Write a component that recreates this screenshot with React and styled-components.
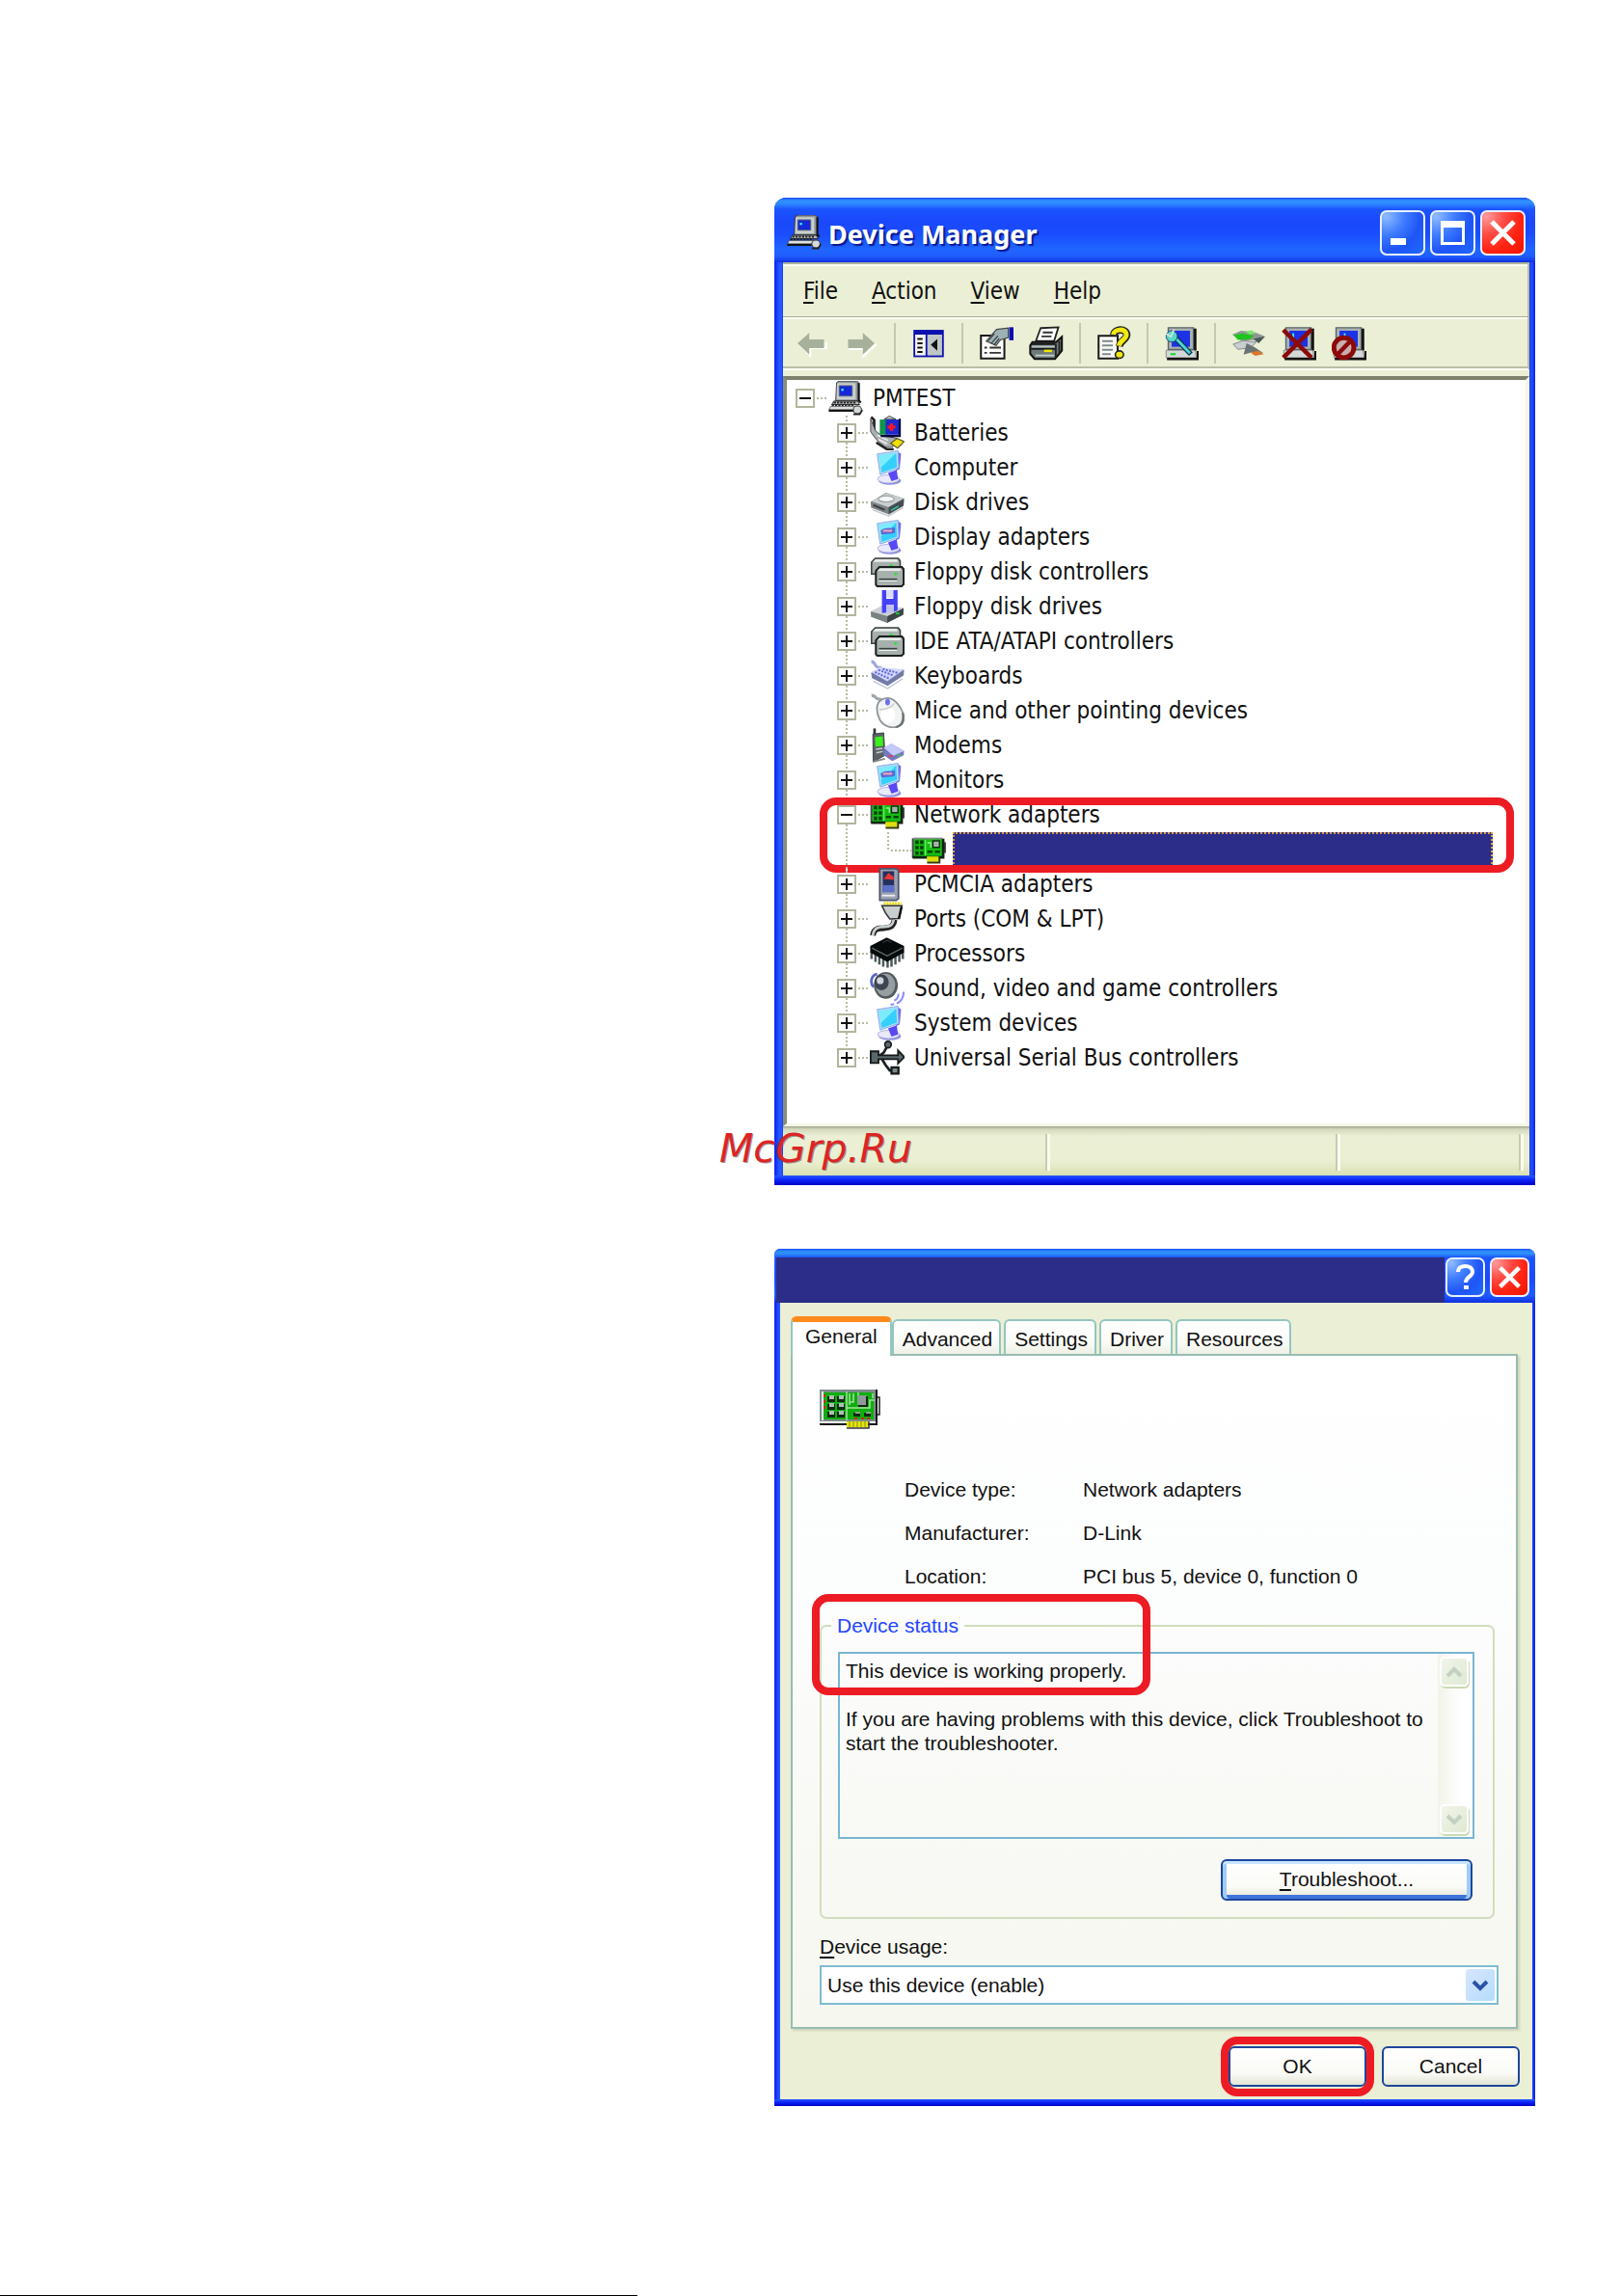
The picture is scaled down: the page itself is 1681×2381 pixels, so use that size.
import React, { useState } from "react";
import styled, { createGlobalStyle, css } from "styled-components";

const shellFont = `"DejaVu Sans Condensed", "DejaVu Sans", sans-serif`;
const dialogFont = `"Liberation Sans", Arial, sans-serif`;
const face = "#ebefd5";
const navy = "#2b2d88";

const GlobalStyle = createGlobalStyle`
  *, *::before, *::after { box-sizing: border-box; }
  body { margin: 0; background: #fff; color: #111; }
  button, select, textarea { font: inherit; color: inherit; margin: 0; }
`;

/* ---------- page ---------- */

const Page = styled.main`
  display: flex;
  flex-direction: column;
  min-height: 100vh;
  padding-top: 205px;
`;
const Columns = styled.div`
  display: grid;
  grid-template-columns: 803fr 789fr 89fr;
`;
const Figures = styled.div`
  grid-column: 2;
  display: flex;
  flex-direction: column;
  gap: 66px;
`;
const FootRule = styled.div`
  margin-top: auto;
  width: 39.3%;
  height: 1px;
  background: #000;
`;
const Highlight = styled.div`
  position: absolute;
  top: ${(p) => p.$top}px;
  right: ${(p) => p.$right};
  bottom: ${(p) => p.$bottom};
  left: ${(p) => p.$left}px;
  width: ${(p) => p.$width || "auto"};
  height: ${(p) => p.$height || "auto"};
  border: 8px solid #ed1c24;
  border-radius: 17px;
  pointer-events: none;
`;
const Watermark = styled.div`
  position: absolute;
  left: -57px;
  bottom: 14px;
  font: italic 41px/48px "DejaVu Sans", sans-serif;
  color: #dd2424;
  text-shadow: 1px 1px 0 rgba(60, 60, 60, 0.5);
`;

/* ---------- window frame ---------- */

const Frame = styled.section`
  position: relative;
  border-radius: 12px 12px 0 0;
  padding: 0 6px 10px 9px;
  background: linear-gradient(90deg, #0a1ef0 0, #2457ff 5px, #2457ff 8px, #1a35e0 9px, #1a35e0 calc(100% - 6px), #2457ff calc(100% - 4px), #0a1ef0 100%);
  &::after {
    content: "";
    position: absolute;
    left: 0;
    right: 0;
    bottom: 0;
    height: 10px;
    background: linear-gradient(#2457ff, #0a20f5 50%, #0000c4);
  }
`;
const DialogFrame = styled(Frame)`
  border-radius: 6px 8px 0 0;
  padding: 0 3px 7px 6px;
  &::after { height: 7px; }
`;
const TitleBar = styled.header`
  display: flex;
  align-items: center;
  gap: 7px;
  height: 67px;
  margin: 0 -6px 0 -9px;
  padding: 5px 10px 0 13px;
  border-radius: 12px 12px 0 0;
  background: linear-gradient(#1846f5 0, #2f90ff 3px, #2f8cff 6px, #1b55ff 12px, #1a48fb 24px, #1a4dff 38px, #2066ff 54px, #1f5cff 61px, #1030e0 67px);
`;
const Title = styled.h1`
  flex: 1;
  margin: 0;
  padding-top: 4px;
  font: bold 27px/36px "Noto Sans", sans-serif;
  color: #fff;
  text-shadow: 2px 2px 1px #0a1a90;
`;
const CaptionButtons = styled.div`
  display: flex;
  gap: 5px;
`;
const CaptionButton = styled.button`
  display: grid;
  place-items: center;
  width: ${(p) => p.$size}px;
  height: ${(p) => p.$size}px;
  padding: 0;
  border: 2px solid #e8f0ff;
  border-radius: 7px;
  background: ${(p) =>
    p.$close
      ? "radial-gradient(circle at 10% 10%, #ff9a9a 0, #ff4a42 35%, #ff2312 65%, #f01400 100%)"
      : "radial-gradient(circle at 10% 10%, #8fbcff 0, #3f7cff 35%, #1f55f5 65%, #1f6aff 100%)"};
`;

/* ---------- device manager ---------- */

const MenuBar = styled.nav`
  display: flex;
  align-items: center;
  gap: 35px;
  height: 56px;
  padding: 2px 21px 0;
  background: ${face};
  border-top: 2px solid #aeb39c;
  border-right: 2px solid #b9bda6;
  box-shadow: inset 0 2px 0 #fbfcf0;
  font: 24px/28px ${shellFont};
`;
const MenuButton = styled.button`
  padding: 0;
  border: 0;
  background: none;
`;
const Key = styled.u`
  text-decoration-thickness: 2px;
  text-underline-offset: 3px;
`;
const ToolBar = styled.div`
  display: flex;
  align-items: center;
  gap: 16px;
  height: 56px;
  padding: 0 11px;
  background: ${face};
  border-top: 1px solid #a9ae98;
  border-bottom: 2px solid #fcfdf4;
  border-right: 2px solid #b9bda6;
  box-shadow: inset 0 2px 0 #fcfdf4, inset 0 -2px 0 #b9bda6;
`;
const ToolButton = styled.button`
  display: block;
  width: 36px;
  height: 36px;
  padding: 0;
  border: 0;
  background: none;
`;
const ToolDivider = styled.span`
  width: 2px;
  height: 42px;
  background: #c3c9ac;
`;
const TreePane = styled.div`
  border-top: 6px solid ${face};
  background: #fff;
`;
const Tree = styled.ul`
  margin: 0;
  padding: 1px 0 50px;
  list-style: none;
  border: solid;
  border-width: 4px 4px 3px 4px;
  border-color: #7d816c #f4f6e6 #f4f6e6 #8a8e78;
  font: 24px/36px ${shellFont};
`;
const SubTree = styled.ul`
  margin: 0;
  padding: 0;
  list-style: none;
`;
const TreeItem = styled.li`
  position: relative;
`;
const TreeRow = styled.div`
  display: flex;
  align-items: center;
  height: 36px;
  padding-left: ${(p) => (p.$root ? 9 : 52)}px;
`;
const dots = "#b7bca2";
const Trunk = styled.span`
  display: grid;
  align-items: center;
  width: 20px;
  height: 36px;
  ${(p) =>
    p.$line &&
    css`
      background: repeating-linear-gradient(${dots} 0 2px, #fff 2px 4px) 9px 0 / 2px
        ${p.$line === "half" ? "50%" : "100%"} no-repeat;
    `}
`;
const Toggle = styled.button`
  display: block;
  width: 20px;
  height: 20px;
  padding: 2px;
  border: 2px solid #b0b69c;
  background: #fff;
  svg { display: block; }
`;
const Branch = styled.span`
  width: 14px;
  height: 2px;
  padding: 0 1px 0 2px;
  background: repeating-linear-gradient(90deg, ${dots} 0 2px, #fff 2px 4px) content-box;
`;
const Elbow = styled.span`
  align-self: flex-start;
  width: 25px;
  height: 20px;
  margin-left: 32px;
  background:
    repeating-linear-gradient(${dots} 0 2px, #fff 2px 4px) 0 0 / 2px 100% no-repeat,
    repeating-linear-gradient(90deg, ${dots} 0 2px, #fff 2px 4px) 0 100% / 100% 2px no-repeat;
`;
const TreeLabel = styled.span`
  margin-left: 10px;
  white-space: nowrap;
`;
const SelectedLabel = styled.span`
  flex: 1;
  height: 36px;
  margin: 0 34px 0 7px;
  border: 2px dotted #d89a45;
  background: ${navy};
`;
const StatusBar = styled.footer`
  display: grid;
  grid-template-columns: 278fr 301fr 191fr 6fr;
  height: 51px;
  padding: 8px 0 5px;
  background: linear-gradient(#9da48c 0, #d3d9bc 3px, ${face} 10px, #ebefd2 36px, #d9dfb4 51px);
`;
const StatusCell = styled.span`
  border-right: 3px solid #fafbf0;
  box-shadow: inset -2px 0 0 #c6ccb0;
`;

/* ---------- properties dialog ---------- */

const DialogTitle = styled.header`
  display: flex;
  align-items: flex-start;
  gap: 5px;
  height: 56px;
  margin: 0 -3px 0 -6px;
  padding: 9px 6px 0 2px;
  border-radius: 6px 8px 0 0;
  background: linear-gradient(#1a50ff 0, #2f90ff 3px, #2f90ff 5px, #1b55ff 9px, #1a48fb 30px, #1f5cff 48px, #1030e0 56px);
`;
const TitleBlank = styled.span`
  flex: 1;
  align-self: stretch;
  margin-right: -4px;
  background: ${navy};
`;
const DialogBody = styled.div`
  padding: 14px 13px 13px 11px;
  background: ${face};
  font: 21px/25px ${dialogFont};
`;
const Tabs = styled.div`
  display: flex;
  align-items: flex-end;
  height: 39px;
`;
const Tab = styled.button`
  height: 36px;
  margin-right: 3px;
  padding: 3px 7px 0 9px;
  border: 2px solid #93c6c0;
  border-bottom: 0;
  border-radius: 6px 6px 0 0;
  background: linear-gradient(#fff, #fbfcf8 60%, #eef0e6);
  white-space: nowrap;
  ${(p) =>
    p.$active &&
    css`
      position: relative;
      height: 41px;
      margin: 0 0 -2px;
      padding: 0 13px 6px;
      border-top: 6px solid #ff8a1c;
      border-bottom: 0;
      background: #fff;
    `}
`;
const Panel = styled.div`
  margin-right: 2px;
  padding: 34px 18px 23px 28px;
  border: 2px solid #97bcb2;
  background: linear-gradient(#fff, #fcfdfd 35%, #f6f7ef);
  box-shadow: 2px 2px 2px #cfd4bb;
`;
const Details = styled.dl`
  display: grid;
  grid-template-columns: 185px 1fr;
  margin: 40px 0 0;
  padding-left: 88px;
  line-height: 45px;
`;
const Term = styled.dt``;
const Value = styled.dd`
  margin: 0;
`;
const StatusArea = styled.div`
  position: relative;
  margin: 16px 4px 0 0;
`;
const Group = styled.fieldset`
  min-width: 0;
  margin: 0;
  padding: 14px 19px 17px 17px;
  border: 2px solid #d1ddbd;
  border-radius: 7px;
`;
const Legend = styled.legend`
  margin-left: -7px;
  padding: 0 6px;
  line-height: 26px;
  color: #2445ff;
`;
const MessageBox = styled.div`
  display: flex;
  height: 194px;
  border: 2px solid #79b6d3;
`;
const Message = styled.textarea`
  flex: 1;
  min-width: 0;
  padding: 5px 6px;
  border: 0;
  outline: 0;
  resize: none;
  overflow: hidden;
  background: none;
`;
const ScrollBar = styled.div`
  display: flex;
  flex-direction: column;
  justify-content: space-between;
  width: 36px;
  padding: 3px 3px 3px 2px;
  background: linear-gradient(90deg, #f3f3ea, #fff 70%);
`;
const ScrollButton = styled.button`
  display: grid;
  place-items: center;
  width: 30px;
  height: 31px;
  padding: 0;
  border: 2px solid #fff;
  border-radius: 5px;
  background: linear-gradient(135deg, #f1f5e9, #dfe9d3);
  box-shadow: 1px 2px 0 #c9dbb4;
`;
const PushButton = styled.button`
  display: grid;
  place-items: center;
  width: ${(p) => p.$width}px;
  height: 42px;
  padding: 0 0 2px;
  border: 2px solid #1c479c;
  border-radius: 6px;
  background: linear-gradient(#fff, #fafaf6 70%, #e2e4d4);
  ${(p) =>
    p.$focused &&
    css`
      height: 43px;
      margin: 21px 2px 0 auto;
      box-shadow: inset 0 3px 0 #c9e4ff, inset 4px 0 0 #9fcbfb, inset -4px 0 0 #9fcbfb, inset 0 -4px 0 #3f74dc;
    `}
`;
const FieldLabel = styled.label`
  display: block;
  margin: 16px 0 6px;
  line-height: 26px;
`;
const SelectBox = styled.div`
  position: relative;
`;
const Select = styled.select`
  display: block;
  width: 100%;
  height: 41px;
  padding: 0 40px 0 6px;
  border: 2px solid #7fbcd2;
  border-radius: 0;
  background: #fff;
  appearance: none;
`;
const SelectArrow = styled.span`
  position: absolute;
  top: 4px;
  right: 4px;
  bottom: 4px;
  display: grid;
  place-items: center;
  width: 30px;
  border-radius: 3px;
  background: linear-gradient(135deg, #d7e6ff, #b5dcfa);
  pointer-events: none;
`;
const Actions = styled.div`
  display: flex;
  justify-content: flex-end;
  gap: 16px;
  margin-top: 18px;
`;
const Anchor = styled.span`
  position: relative;
`;

/* ---------- icons ---------- */

const Svg = styled.svg`
  display: block;
  flex: none;
`;
const Icon = ({ children, size = 36 }) => (
  <Svg width={size} height={size} viewBox="0 0 16 16" aria-hidden="true">
    {children}
  </Svg>
);

const PcIcon = () => (
  <Icon>
    <path d="M3.8.8 5 0h8l1.2 1v8.200H3.400z" fill="#8c9496" stroke="#333" strokeWidth=".4" />
    <path d="M4 1h8.600v7.600H3.800z" fill="#c9cfd0" />
    <path d="M5 2.200h6v4.800H5z" fill="#1428d8" stroke="#5a6468" strokeWidth=".4" />
    <path d="M6 3.600h1v1H6z" fill="#3ff" />
    <path d="M14 1v8l1 1" stroke="#111" strokeWidth=".9" fill="none" />
    <path d="M2.500 9.300h11l.9 1.600H1.600z" fill="#b9bfc0" stroke="#222" strokeWidth=".4" />
    <path d="M2.500 10h10M1.600 11.200h10.600" stroke="#222" strokeWidth=".9" strokeDasharray="1 .5" />
    <path d="M1 11.800h11.500v1.600H.3z" fill="#dfe3e3" stroke="#444" strokeWidth=".3" />
    <path d="M.2 13.700h12" stroke="#111" strokeWidth="1" />
    <ellipse cx="13.400" cy="13.300" rx="1.900" ry="1.800" fill="#d5d9d9" stroke="#444" strokeWidth=".5" />
    <path d="M11.500 15.400h3l1.200-2" stroke="#222" strokeWidth=".7" fill="none" />
  </Icon>
);
const BatteryIcon = () => (
  <Icon>
    <path d="M.6.6 2 2v6.500l3 1.800h6" stroke="#222" strokeWidth="1.200" fill="none" />
    <path d="M.4 1.500v6L3 11l4 3.600h3.400l2-4.200-7-1.200L2.600 7z" fill="#aab0b2" stroke="#444" strokeWidth=".4" />
    <path d="m3.400 9 5 2.400M4 11l4 2" stroke="#eee" strokeWidth=".7" />
    <path d="M6.600 1.700 9 .2l3 1.500z" fill="#c6cbcc" stroke="#333" strokeWidth=".4" />
    <path d="M4.600 1.800h3.400v7H4.600z" fill="#10944a" />
    <path d="M7.300 1.800h6.200v7H7.300z" fill="#1c2ad0" />
    <path d="M13.800 1.400v8H5" stroke="#06063c" strokeWidth="1" fill="none" />
    <path d="M8.200 5.300h3.600M10 3.500v3.600" stroke="#f01828" strokeWidth="1.500" />
    <path d="m9.600 12.800 3-2.300 3.200 1.500-3 3z" fill="#f0e000" stroke="#553" strokeWidth=".5" />
    <path d="M3 12.400 8 15.600h3" stroke="#222" strokeWidth="1.100" fill="none" />
  </Icon>
);
const Crt = ({ pattern }) => (
  <Icon>
    <ellipse cx="9.200" cy="14" rx="5.200" ry="1.900" fill="#8f8ee0" />
    <ellipse cx="8.600" cy="13.200" rx="5" ry="1.900" fill="#e9eafc" stroke="#a8abe0" strokeWidth=".4" />
    <path d="m8.400 10.400 4-1.400.6 4.200-3 1z" fill="#5a48f4" />
    <path d="M12.600.4 14.400 1.600 13.800 8.600 12 9.600z" fill="#746af0" />
    <path d="M3.400 1.700 13 .2l.4 8-8.600 3z" fill="#b4dcfa" stroke="#80a6e4" strokeWidth=".4" />
    <path d="M4.200 2.400 12.200 1.200l.3 6.600-7 2.400z" fill="#34d0fc" />
    <path d="M4.200 2.400 12.200 1.200 5 8z" fill="#7cecfc" />
    {pattern && <path d="M5 5c2-2 4.200-.6 6.600-1.600v2.600c-2.400 1-4.400 0-6.200 1z" fill="#5f68d4" />}
    {pattern && <path d="M6.200 5.300c1-.8 2.400.3 4-.4" stroke="#f0a8b8" strokeWidth=".9" fill="none" />}
  </Icon>
);
const DiskIcon = () => (
  <Icon>
    <path d="m.4 7.800 7-4.200 8.400 2.600-.2 3.400-6.800 4L.6 10.400z" fill="#7b8385" />
    <path d="m.6 7.400 7-3.600 8 2.400-7 4z" fill="#c9cecf" />
    <ellipse cx="7.600" cy="6.400" rx="3.600" ry="1.400" fill="#f6f6f6" stroke="#969c9e" strokeWidth=".5" />
    <path d="m8.700 10.200 7-3.800-.2 3.200-6.800 3.800z" fill="#454d52" />
    <path d="m9.800 11.700 3.400-1.900" stroke="#35c0a0" strokeWidth=".7" />
    <path d="m1.600 9.200 5.200 2.200" stroke="#333" strokeWidth=".7" />
    <path d="m1.200 11.400 7.400 2.800 6.800-3.800" stroke="#c4c8ca" strokeWidth=".6" fill="none" />
  </Icon>
);
const ControllerIcon = () => (
  <Icon>
    <path d="M2.500 1.800h10.600l.9 1.200V9H.8V3.600z" fill="#a7b0ad" stroke="#3d4442" strokeWidth=".7" />
    <path d="M2.700 2.200h9.800l.3 1.200H1.400z" fill="#e8ecea" />
    <path d="M9.300 5h1.200" stroke="#1e2" strokeWidth=".9" />
    <path d="M4.400 5.800h10.400l.8 1V13.800l-1 .9H3.400l-.6-.7V7.600z" fill="#a7b0ad" stroke="#1c201f" strokeWidth=".9" />
    <path d="M4.600 6.400h9.400l.3 1.200H3.600z" fill="#e8ecea" />
    <path d="M4.200 11.400h8.400" stroke="#39413e" strokeWidth=".7" />
    <path d="M4.200 12.200h8.400" stroke="#eef2f0" strokeWidth=".5" />
    <path d="M11.200 9h1.400" stroke="#1e2" strokeWidth=".9" />
  </Icon>
);
const FloppyIcon = () => (
  <Icon>
    <path d="m.4 10.400 6-3 9.200 1.400-.2 3L8 15.600.6 12.800z" fill="#7a8284" />
    <path d="m.4 10.200 6-3 9.200 1.600-7.400 3.600z" fill="#cfd3d4" />
    <path d="m8.200 12.400 7.400-3.600-.2 3L8 15.400z" fill="#3d4549" />
    <path d="M5.600.4h2v4h3.200v-4h2v9.400L11 10.400V7.200H7.600v3.600l-2 .2z" fill="#4442f4" />
    <path d="M7.600.4h3.200v3.600H7.600z" fill="#dcdcf6" />
    <path d="M7.600 7.200H11v3.400l-3.400.6z" fill="#c0c1ec" />
    <path d="M12 11.200h1.600" stroke="#2c3" strokeWidth=".9" />
  </Icon>
);
const KeyboardIcon = () => (
  <Icon>
    <path d="M.7 1.400c2 0 1.200 2.200 3 2.600s1.400 0 1.600 1" stroke="#a0a8d6" strokeWidth="1.400" fill="none" />
    <path d="m.6 6.600 4-2.200 11.200.8-.2 2.600-7.400 4.800L1 9z" fill="#747ba8" />
    <path d="m.6 6.200 4-2.200 11.200 1-7.800 5.400z" fill="#d2d6fa" />
    <path d="m2.400 6.200 6.600 3M4 5.200l7 2.600M6 4.800l7 1.800" stroke="#6068dc" strokeWidth=".9" strokeDasharray=".9 .6" />
    <path d="m1.600 10.400 6.600 3.400 7-4.600" stroke="#bfc2d2" strokeWidth=".6" fill="none" />
  </Icon>
);
const MouseIcon = () => (
  <Icon>
    <path d="M.8 1c2-.3 1.600 1.600 3 1.600S5.600 3 6 4" stroke="#a0a6aa" strokeWidth="1.500" fill="none" />
    <path d="M5 3.200c3.600-2.400 6.600-.4 9 3.200 2.400 4 2.200 7.600-.6 8.800-3 1.200-6.800.2-8.800-3C3 9 2.600 4.800 5 3.200z" fill="#f2f3f3" stroke="#8d9498" strokeWidth=".8" />
    <ellipse cx="8.400" cy="10" rx="3.400" ry="3.600" fill="#fff" />
    <path d="M15.200 9c.6 3.400-.4 5.800-3 6.600" stroke="#6b7174" strokeWidth="1" fill="none" />
    <path d="M4.400 7.400c3 .2 5.400-1 7-2.800" stroke="#c4c8ca" strokeWidth=".6" fill="none" />
    <ellipse cx="8.200" cy="4" rx="1.100" ry="1.500" fill="#6a70f0" />
  </Icon>
);
const ModemIcon = () => (
  <Icon>
    <path d="M2.200.2v3" stroke="#333" strokeWidth="1.200" />
    <path d="m1.400 2.800 5-.6.6 10.400-5.400 3z" fill="#5a6268" stroke="#32383c" strokeWidth=".4" />
    <path d="m2.400 4.200 3.600-.4.2 4.400-3.600.4z" fill="#3cf01c" />
    <path d="m2.800 9.800 3-.4M3 11.400l3-.6" stroke="#c3c8cc" strokeWidth=".7" />
    <path d="m6.400 9.200 3.600-2 5.800 3.400-.2 2-5.200 2.600-4-2.600z" fill="#737bc0" />
    <path d="m6.400 9 3.600-1.800 5.800 3.400-5 2.200z" fill="#c4c9f8" />
    <path d="M8.600 13h2" stroke="#e04050" strokeWidth=".8" />
    <path d="M12.600 12.600h1.800" stroke="#4c4" strokeWidth=".7" />
    <path d="m1.600 15.500 5.400-1.300" stroke="#888" strokeWidth=".8" />
  </Icon>
);
const NicIcon = () => (
  <Icon>
    <path d="M.8 2.800v9" stroke="#444b50" strokeWidth="1" />
    <path d="M1.200 3h13v8.200h-13z" fill="#14bc10" />
    <path d="M1 2.900h13.400" stroke="#7d8d82" strokeWidth=".8" />
    <path d="M14.700 3v8.600H.6" stroke="#0c240c" strokeWidth="1.200" fill="none" />
    <path d="M15.500 4.600v5" stroke="#333" strokeWidth=".9" />
    <path d="M1.900 3.800h1.500v1.600H1.900zM4.100 3.800h1.500v1.600H4.100zM1.900 6.300h1.500v1.600H1.900zM4.100 6.300h1.500v1.600H4.100zM1.900 8.800h1.500v1.600H1.900zM4.100 8.800h1.500v1.600H4.100z" fill="#043c0a" />
    <path d="M6.500 3.600v7.200" stroke="#6fe86f" strokeWidth=".6" />
    <path d="M10 4h3v3h-3z" fill="#a9b3ae" stroke="#123012" strokeWidth=".6" />
    <path d="M7.400 9h2.400M10.900 9h2.400" stroke="#04460c" strokeWidth="1.200" />
    <path d="M7.400 4.900h1.600v2.200" stroke="#9cf09c" strokeWidth=".6" fill="none" />
    <path d="M7.200 11.200h5.400v2.400H7.200z" fill="#dce008" />
    <path d="M7.300 14h5.700v-2" stroke="#3b3b08" strokeWidth=".9" fill="none" />
  </Icon>
);
const PcmciaIcon = () => (
  <Icon>
    <path d="M4.600.8h7.600l1 .8v13l-1 .8H4.600z" fill="#9aa1b4" stroke="#4c5468" strokeWidth=".8" />
    <path d="M6 2h5.200v9.600H6z" fill="#26305c" />
    <path d="m6.400 5.600 2.200-2.800 2.400 1.800v1.400z" fill="#e83838" />
    <path d="M6 8.400h5.200v3.200H6z" fill="#5b70c8" />
    <path d="M5.600 13.200h6" stroke="#eee" strokeWidth=".8" />
  </Icon>
);
const PortIcon = () => (
  <Icon>
    <path d="M6.400 .9h8.200" stroke="#e8dc00" strokeWidth="1.300" strokeDasharray=".9 .4" />
    <path d="M5.600 1.900h9.200l-.6 2.700-.8 3.200-4.200.2-2-2.800z" fill="#c9cfd0" stroke="#333" strokeWidth=".7" />
    <path d="M14.600 2.400 13.400 8" stroke="#111" strokeWidth="1.100" />
    <path d="M11.400 8.400c-.4 3-2 3.600-4.600 3.800-3 0-5 .2-5.400 3.400" stroke="#222" strokeWidth="2.600" fill="none" />
    <path d="M11 8.400c-.4 2.600-1.800 3-4.200 3.200-3 0-5 .6-5.400 4" stroke="#c9cfd0" strokeWidth="1.200" fill="none" />
  </Icon>
);
const CpuIcon = () => (
  <Icon>
    <path d="M.8 7v3.400M2.600 8v3.800M4.400 9v4M6.200 10v4M8.200 11v3.400M10 10v4M11.800 9v4M13.600 8v3.800M15.200 7v3.400" stroke="#4d585a" strokeWidth="1.100" />
    <path d="m.2 4.400 7.600-3.800 8 3.800v3L8 11.800.2 7.400z" fill="#070a0a" />
    <path d="m1 5.400 7 3.600 7-3.600" stroke="#5d6a6c" strokeWidth=".6" fill="none" />
    <path d="m6 2.800 2-1 2 1" stroke="#445" strokeWidth=".4" fill="none" />
  </Icon>
);
const SoundIcon = () => (
  <Icon>
    <ellipse cx="7.400" cy="6.600" rx="5.500" ry="6.200" fill="#525a5e" />
    <ellipse cx="7.200" cy="6.400" rx="4.500" ry="5.200" fill="#969ea2" />
    <ellipse cx="5.400" cy="5.200" rx="3.300" ry="3.700" fill="#3d4650" />
    <circle cx="4.800" cy="4.400" r="1.600" fill="#cdd3dc" />
    <path d="M3.400 1.400C.4 2 0 5.600 1.800 7.400" stroke="#5a64c8" strokeWidth="1.200" fill="none" />
    <path d="M11.200 13.600c1.400-.6 2-1.600 2-3.200M12.400 15c2.200-1 3.200-2.800 3.200-5.400M9.600 15.600l1.600-.4" stroke="#8b8ff6" strokeWidth=".9" fill="none" />
  </Icon>
);
const UsbIcon = () => (
  <Icon>
    <path d="M4 7.400 6.400 5.600 8.200 2.400M5.400 8.200l1.800 3 2 2.600h1.200" stroke="#1b2122" strokeWidth="1.200" fill="none" />
    <path d="M.4 5h3.600v1.800H13V4.600l2.900 3L13 10.600V8.600H4v1.800H.4z" fill="#59666a" stroke="#14191a" strokeWidth=".8" />
    <circle cx="8.400" cy="1.900" r="1.500" fill="#59666a" stroke="#14191a" strokeWidth=".7" />
    <path d="M10 12.400h3.200v2.900H10z" fill="#7c888c" stroke="#14191a" strokeWidth="1" />
  </Icon>
);

const BackIcon = () => (
  <Icon>
    <path d="M3 8.600 7.600 13.600v-3.400H15V7.600" fill="none" stroke="#fff" strokeWidth="1" />
    <path d="M1.800 8 7.200 3.200v3H14v4H7.200v3z" fill="#a6b09a" />
  </Icon>
);
const ForwardIcon = () => (
  <Icon>
    <path d="M2.400 10.600h6.800v3.200L15 8.400" fill="none" stroke="#fff" strokeWidth="1" />
    <path d="M14.200 8 8.800 3.200v3H2v4h6.800v3z" fill="#a6b09a" />
  </Icon>
);
const PaneIcon = () => (
  <Icon>
    <path d="M1 1.800h14v12.600H1z" fill="#0c10b0" />
    <path d="M1.800 4h4.800v9.600H1.800z" fill="#f4f5ee" />
    <path d="M7.400 4h6.800v9.600H7.400z" fill="#bfc6c6" />
    <path d="M2.800 6h2.400M2.800 8h2.400M2.800 10h2.400M2.800 12h2.400" stroke="#111" strokeWidth=".8" />
    <path d="M12 6v5.400L9 8.700z" fill="#111" />
  </Icon>
);
const PropertiesIcon = () => (
  <Icon>
    <path d="M1 4.400h10.800V15H1z" fill="#fdfdfa" stroke="#1a1a1a" strokeWidth=".9" />
    <path d="M2.600 10h1.200M5 10h5.200M2.600 12.400h1.200M5 12.400h5.200" stroke="#333" strokeWidth=".8" />
    <path d="m3.400 7 4.800-5.400L13.600 1v4.400L10 6.400 8 9z" fill="#9db1b4" stroke="#444" strokeWidth=".5" />
    <path d="m4.200 7 3-3.400M5.800 8l3-3.400M7 8.800l2.400-3" stroke="#333" strokeWidth=".5" />
    <path d="M14 .6h2v6h-2z" fill="#0c10b0" />
  </Icon>
);
const PrinterIcon = () => (
  <Icon>
    <path d="m5.400 1 8.200-.4-2 6.400H3.200z" fill="#fff" stroke="#222" strokeWidth=".8" />
    <path d="M6.400 3h4.600M5.800 4.800h4.600" stroke="#333" strokeWidth=".8" />
    <path d="M1.600 7.400h11L15.200 5v6.400L12 15.200H2.600L.6 12.800V9z" fill="#6f7a7a" stroke="#111" strokeWidth=".9" />
    <path d="M1.400 8.400h10.800M1 10.600h11.200" stroke="#1a1a1a" strokeWidth=".7" />
    <path d="M1.400 9.500h10.400" stroke="#b9c2c2" strokeWidth=".8" />
    <path d="M7 11.500h3.600" stroke="#f2ea00" strokeWidth="1.100" />
    <path d="M3 13.600h8.600" stroke="#c5cccc" strokeWidth=".8" />
    <path d="M12.400 8.200v6.400M14 7v5.600" stroke="#222" strokeWidth=".8" />
  </Icon>
);
const HelpIcon = () => (
  <Icon>
    <path d="M1 4.600h8.800V15H1z" fill="#fbfbf6" stroke="#1a1a1a" strokeWidth=".9" />
    <path d="M2.600 7h5M2.600 9h5M2.600 11h5M2.600 13h4" stroke="#7d8a90" strokeWidth=".8" />
    <path d="M8 4.200C8 1.400 13.800.8 14 4c0 2.400-3 2.600-3.400 5.400" stroke="#222" strokeWidth="3.400" fill="none" />
    <path d="M7.800 4C8 1.400 13.600.8 13.800 4c0 2.400-3 2.400-3.400 5.200" stroke="#f0e810" strokeWidth="2.200" fill="none" />
    <ellipse cx="10.600" cy="13.200" rx="1.900" ry="1.700" fill="#f0e810" stroke="#222" strokeWidth=".7" />
  </Icon>
);
const Desktop = () => (
  <>
    <path d="M2 .8h11.600v10H2z" fill="#aab2b2" stroke="#5a6464" strokeWidth=".6" />
    <path d="M3.600 2.200h8.400v7.400H3.600z" fill="#1c32e4" />
    <path d="M14.400 1.200v10.200" stroke="#111" strokeWidth="1.200" />
    <path d="M1 11.200h13.400l.6 3.400H1z" fill="#d3d8d8" stroke="#666" strokeWidth=".3" />
    <path d="M1.400 15.200h14.200v-3.600" stroke="#111" strokeWidth="1.100" fill="none" />
  </>
);
const ScanIcon = () => (
  <Icon>
    <Desktop />
    <path d="M3 13h2.400" stroke="#1d2" strokeWidth=".9" />
    <path d="m5 5.200 7.400 7.800" stroke="#063a44" strokeWidth="2.400" />
    <path d="m4.600 4.800 7.400 7.800" stroke="#4fd4dc" strokeWidth="1.300" />
    <circle cx="3.600" cy="4.800" r="2.600" fill="#58d8c8" stroke="#247" strokeWidth=".4" />
    <path d="M.8 3.400 3.200 5 4.600 1.600" stroke="#d6e2dc" strokeWidth=".8" fill="none" />
  </Icon>
);
const UpdateIcon = () => (
  <Icon>
    <path d="m.4 4 4-1.800 6 .6 5 2-5 1.600-6 .4z" fill="#8d9894" />
    <path d="m1 4.200 4-.8 5.400 1-2 1.800-5.400.2z" fill="#1fc41f" />
    <path d="m6.400 2.600 3-.6 1.800 1.400-3 .6z" fill="#7ce86c" />
    <path d="m.8 8.400 4.600-1.600 6 .6L9 10l-6 .8z" fill="#c9cfd0" stroke="#7a8284" strokeWidth=".4" />
    <path d="m10 6 5.600-1.200-3 3.200z" fill="#4b5555" />
    <path d="m7 8 4 2 3.600 2.400-4.800-.4-4.200 1.200z" fill="#6b7474" />
    <path d="m8.600 12.200 3.800-.8 2.600 1.600-4 .8z" fill="#d8772c" />
  </Icon>
);
const UninstallIcon = () => (
  <Icon>
    <Desktop />
    <path d="M5.400 3.400v2" stroke="#3ff" strokeWidth=".8" />
    <path d="m.8 1.800 13 12.800M13.800 1.600.8 14.600" stroke="#8c0a0a" strokeWidth="2" />
  </Icon>
);
const DisableIcon = () => (
  <Icon>
    <Desktop />
    <path d="M6 3.400v2" stroke="#3ff" strokeWidth=".8" />
    <circle cx="5.600" cy="10" r="4.600" fill="#c9aeb0" stroke="#8c0a0a" strokeWidth="2.200" />
    <path d="m2.600 13.200 6.200-6.400" stroke="#8c0a0a" strokeWidth="2" />
  </Icon>
);

const CardIcon = () => (
  <Svg width="63" height="42" viewBox="0 0 63 42" aria-hidden="true">
    <path d="M0 1h59v33H0z" fill="#7e8c8c" />
    <path d="M2 3h2v30H2z" fill="#f4f4f4" />
    <path d="M4 4h52v28H4z" fill="#0caf0c" />
    <path d="M59 1v36H0" fill="none" stroke="#151515" strokeWidth="2" />
    <path d="M60 9h2v18h-2" fill="none" stroke="#222" strokeWidth="1.500" />
    <path d="M4 6h2v3H4zM4 12h2v3H4zM4 18h2v3H4z" fill="#e02020" />
    {[7, 15, 23].map((y) =>
      [8, 18].map((x) => (
        <g key={`${x}-${y}`}>
          <path d={`M${x} ${y + 1}h8v6h-8z`} fill="#102810" />
          <path d={`M${x + 2} ${y}h5v4h-5z`} fill="#b4bcb8" />
        </g>
      ))
    )}
    <path d="M28 3v30M31 5v12M35 5v9h-4M28 20h24v-8h5M55 5v5M40 4v3" stroke="#a8e0a0" strokeWidth="1.500" fill="none" />
    <path d="M39 7h10v10H39z" fill="#8f9a98" />
    <path d="M49 8v10H40" stroke="#102810" strokeWidth="2" fill="none" />
    <path d="M35 25h7v4h-7zM46 25h7v4h-7z" fill="#102810" />
    <path d="M37 24h5v2h-5zM48 24h5v2h-5z" fill="#8fa08f" />
    <path d="M36 31h3M43 31h3M49 31h3" stroke="#d02020" strokeWidth="2" />
    <path d="M28 34h22v6H28z" fill="#e6e60a" />
    <path d="M31 34v6M35 34v6M39 34v6M43 34v6M47 34v6" stroke="#8a8a10" strokeWidth="1" />
    <path d="M28 41h23v-7" fill="none" stroke="#333" strokeWidth="1.500" />
  </Svg>
);
const MinimizeGlyph = () => (
  <Svg width="43" height="43" aria-hidden="true"><path d="M9 27h16v7H9z" fill="#fff" /></Svg>
);
const MaximizeGlyph = () => (
  <Svg width="43" height="43" aria-hidden="true">
    <path d="M9 9h25v25H9z M12 16v15h19V16z" fill="#fff" fillRule="evenodd" />
  </Svg>
);
const CloseGlyph = ({ size = 43 }) => (
  <Svg width={size} height={size} viewBox="0 0 43 43" aria-hidden="true">
    <path d="m10 10 23 23M33 10 10 33" stroke="#fff" strokeWidth="5" />
  </Svg>
);
const QuestionGlyph = () => (
  <Svg width="37" height="37" viewBox="0 0 37 37" aria-hidden="true">
    <path d="M11 13c0-8 15-8 15 0 0 5-7 5-7 11" stroke="#fff" strokeWidth="4" fill="none" />
    <path d="M17 27h5v4h-5z" fill="#fff" />
  </Svg>
);
const Chevron = ({ up, color }) => (
  <Svg width="18" height="12" viewBox="0 0 18 12" aria-hidden="true">
    <path d={up ? "m2 10 7-7 7 7" : "m2 2 7 7 7-7"} stroke={color} strokeWidth="4" fill="none" />
  </Svg>
);
const ToggleGlyph = ({ open }) => (
  <svg width="12" height="12" viewBox="0 0 12 12" aria-hidden="true">
    <path d={open ? "M0 5h12v2H0z" : "M0 5h12v2H0zM5 0h2v12H5z"} fill="#111" />
  </svg>
);

/* ---------- content ---------- */

const menus = ["File", "Action", "View", "Help"];

const tools = [
  [["Back", BackIcon], ["Forward", ForwardIcon]],
  [["Show console tree", PaneIcon]],
  [["Properties", PropertiesIcon], ["Print", PrinterIcon]],
  [["Help", HelpIcon]],
  [["Scan for hardware changes", ScanIcon]],
  [["Update driver", UpdateIcon], ["Uninstall", UninstallIcon], ["Disable", DisableIcon]],
];

const categories = [
  ["Batteries", BatteryIcon],
  ["Computer", Crt],
  ["Disk drives", DiskIcon],
  ["Display adapters", () => <Crt pattern />],
  ["Floppy disk controllers", ControllerIcon],
  ["Floppy disk drives", FloppyIcon],
  ["IDE ATA/ATAPI controllers", ControllerIcon],
  ["Keyboards", KeyboardIcon],
  ["Mice and other pointing devices", MouseIcon],
  ["Modems", ModemIcon],
  ["Monitors", () => <Crt pattern />],
  ["Network adapters", NicIcon, true],
  ["PCMCIA adapters", PcmciaIcon],
  ["Ports (COM & LPT)", PortIcon],
  ["Processors", CpuIcon],
  ["Sound, video and game controllers", SoundIcon],
  ["System devices", Crt],
  ["Universal Serial Bus controllers", UsbIcon],
];

const tabs = ["General", "Advanced", "Settings", "Driver", "Resources"];

const details = [
  ["Device type:", "Network adapters"],
  ["Manufacturer:", "D-Link"],
  ["Location:", "PCI bus 5, device 0, function 0"],
];

const statusText =
  "This device is working properly.\n\nIf you are having problems with this device, click Troubleshoot to start the troubleshooter.";

function Category({ name, icon: CategoryIcon, open, last }) {
  return (
    <TreeItem>
      <TreeRow>
        <Trunk $line={last ? "half" : "full"}>
          <Toggle aria-label={`Toggle ${name}`} aria-expanded={!!open}>
            <ToggleGlyph open={open} />
          </Toggle>
        </Trunk>
        <Branch />
        <CategoryIcon />
        <TreeLabel>{name}</TreeLabel>
      </TreeRow>
      {open && (
        <>
          <SubTree>
            <TreeRow as="li">
              <Trunk $line="full" />
              <Elbow />
              <NicIcon />
              <SelectedLabel />
            </TreeRow>
          </SubTree>
          <Highlight $left={34} $top={0} $right="12px" $bottom="-6px" />
        </>
      )}
    </TreeItem>
  );
}

function DeviceManager() {
  return (
    <Frame aria-label="Device Manager">
      <TitleBar>
        <PcIcon />
        <Title>Device Manager</Title>
        <CaptionButtons>
          <CaptionButton $size={47} aria-label="Minimize"><MinimizeGlyph /></CaptionButton>
          <CaptionButton $size={47} aria-label="Maximize"><MaximizeGlyph /></CaptionButton>
          <CaptionButton $size={47} $close aria-label="Close"><CloseGlyph /></CaptionButton>
        </CaptionButtons>
      </TitleBar>
      <MenuBar>
        {menus.map((name) => (
          <MenuButton key={name}>
            <Key>{name[0]}</Key>
            {name.slice(1)}
          </MenuButton>
        ))}
      </MenuBar>
      <ToolBar>
        {tools.map((group, index) => (
          <React.Fragment key={index}>
            {index > 0 && <ToolDivider />}
            {group.map(([name, ToolIcon]) => (
              <ToolButton key={name} aria-label={name}><ToolIcon /></ToolButton>
            ))}
          </React.Fragment>
        ))}
      </ToolBar>
      <TreePane>
        <Tree>
          <TreeItem>
            <TreeRow $root>
              <Trunk>
                <Toggle aria-label="Toggle PMTEST" aria-expanded><ToggleGlyph open /></Toggle>
              </Trunk>
              <Branch />
              <PcIcon />
              <TreeLabel>PMTEST</TreeLabel>
            </TreeRow>
            <SubTree>
              {categories.map(([name, icon, open], index) => (
                <Category key={name} name={name} icon={icon} open={open} last={index === categories.length - 1} />
              ))}
            </SubTree>
          </TreeItem>
        </Tree>
      </TreePane>
      <StatusBar>
        <StatusCell />
        <StatusCell />
        <StatusCell />
      </StatusBar>
      <Watermark>McGrp.Ru</Watermark>
    </Frame>
  );
}

function PropertiesDialog() {
  const [active, setActive] = useState("General");
  return (
    <DialogFrame aria-label="Device properties">
      <DialogTitle>
        <TitleBlank />
        <CaptionButton $size={41} aria-label="Help"><QuestionGlyph /></CaptionButton>
        <CaptionButton $size={41} $close aria-label="Close"><CloseGlyph size={37} /></CaptionButton>
      </DialogTitle>
      <DialogBody>
        <Tabs role="tablist">
          {tabs.map((name) => (
            <Tab key={name} role="tab" aria-selected={name === active} $active={name === active} onClick={() => setActive(name)}>
              {name}
            </Tab>
          ))}
        </Tabs>
        <Panel>
          <CardIcon />
          <Details>
            {details.map(([term, value]) => (
              <React.Fragment key={term}>
                <Term>{term}</Term>
                <Value>{value}</Value>
              </React.Fragment>
            ))}
          </Details>
          <StatusArea>
            <Group>
              <Legend>Device status</Legend>
              <MessageBox>
                <Message readOnly aria-label="Device status" value={statusText} />
                <ScrollBar>
                  <ScrollButton disabled aria-label="Scroll up"><Chevron up color="#c3d0c2" /></ScrollButton>
                  <ScrollButton disabled aria-label="Scroll down"><Chevron color="#c3d0c2" /></ScrollButton>
                </ScrollBar>
              </MessageBox>
              <PushButton $width={261} $focused>
                <span><Key>T</Key>roubleshoot...</span>
              </PushButton>
            </Group>
            <Highlight $left={-8} $top={-20} $width="351px" $height="105px" />
          </StatusArea>
          <FieldLabel htmlFor="device-usage"><Key>D</Key>evice usage:</FieldLabel>
          <SelectBox>
            <Select id="device-usage" defaultValue="enable">
              <option value="enable">Use this device (enable)</option>
            </Select>
            <SelectArrow><Chevron color="#2a52a8" /></SelectArrow>
          </SelectBox>
        </Panel>
        <Actions>
          <Anchor>
            <PushButton $width={143}>OK</PushButton>
            <Highlight $left={-8} $top={-10} $right="-8px" $bottom="-10px" />
          </Anchor>
          <PushButton $width={143}>Cancel</PushButton>
        </Actions>
      </DialogBody>
    </DialogFrame>
  );
}

export default function App() {
  return (
    <>
      <GlobalStyle />
      <Page>
        <Columns>
          <Figures>
            <DeviceManager />
            <PropertiesDialog />
          </Figures>
        </Columns>
        <FootRule />
      </Page>
    </>
  );
}
